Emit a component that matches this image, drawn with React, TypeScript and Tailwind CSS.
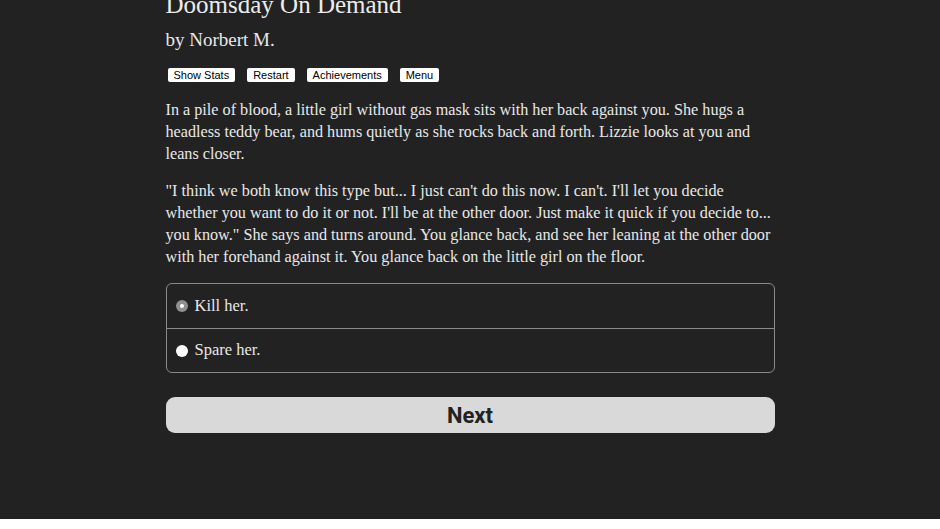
import { useState } from 'react';

const serif = { fontFamily: '"Liberation Serif", "DejaVu Serif", serif' };

function App() {
    // selected choice
    const [choice, setChoice] = useState(0);

    const choices = ['Kill her.', 'Spare her.'];

    return (
        <div className="min-h-screen w-full bg-[#222222] text-[#e8e8e8]" style={serif}>
            <div className="mx-auto w-[609px] pt-0">
                {/* header */}
                <h1 className="-mt-[10px] text-[25px] leading-[30px] text-[#ececec]">Doomsday On Demand</h1>
                <h2 className="mt-[8px] text-[19px] leading-[24px]">by Norbert M.</h2>

                {/* top buttons */}
                <div
                    className="mt-[16px] flex gap-[12px] pl-[2px]"
                    style={{ fontFamily: '"Liberation Sans", Arial, sans-serif' }}
                >
                    {['Show Stats', 'Restart', 'Achievements', 'Menu'].map((b) => (
                        <button
                            key={b}
                            className="h-[14px] rounded-[2px] bg-white px-[6px] text-[11px] leading-[14px] text-black"
                        >
                            {b}
                        </button>
                    ))}
                </div>

                {/* story text */}
                <div className="mt-[17px] text-[16.2px] leading-[22px]">
                    <p>
                        In a pile of blood, a little girl without gas mask sits with her back against you. She
                        hugs a headless teddy bear, and hums quietly as she rocks back and forth. Lizzie looks
                        at you and leans closer.
                    </p>
                    <p className="mt-[15px]">
                        "I think we both know this type but... I just can't do this now. I can't. I'll let you
                        decide whether you want to do it or not. I'll be at the other door. Just make it quick
                        if you decide to... you know." She says and turns around. You glance back, and see her
                        leaning at the other door with her forehand against it. You glance back on the little
                        girl on the floor.
                    </p>
                </div>

                {/* choices */}
                <div className="mt-[15px] overflow-hidden rounded-[6px] border border-[#8a8a8a]">
                    {choices.map((c, i) => (
                        <label
                            key={c}
                            className={`flex h-[44px] cursor-pointer items-center gap-[7px] pl-[9px] text-[16.5px] ${
                                i > 0 ? 'border-t border-[#8a8a8a]' : ''
                            }`}
                            onClick={() => setChoice(i)}
                        >
                            {choice === i ? (
                                <span className="flex h-[12px] w-[12px] items-center justify-center rounded-full bg-[#8f8f8f]">
                                    <span className="h-[4px] w-[4px] rounded-full bg-white" />
                                </span>
                            ) : (
                                <span className="h-[12px] w-[12px] rounded-full bg-white" />
                            )}
                            {c}
                        </label>
                    ))}
                </div>

                {/* next button */}
                <button
                    className="mt-[24px] h-[36px] w-full rounded-[9px] bg-[#d9d9d9] text-[22px] font-bold text-[#222]"
                    style={{ fontFamily: 'Roboto, "Liberation Sans", sans-serif' }}
                >
                    Next
                </button>
            </div>
        </div>
    );
}

export default App;
